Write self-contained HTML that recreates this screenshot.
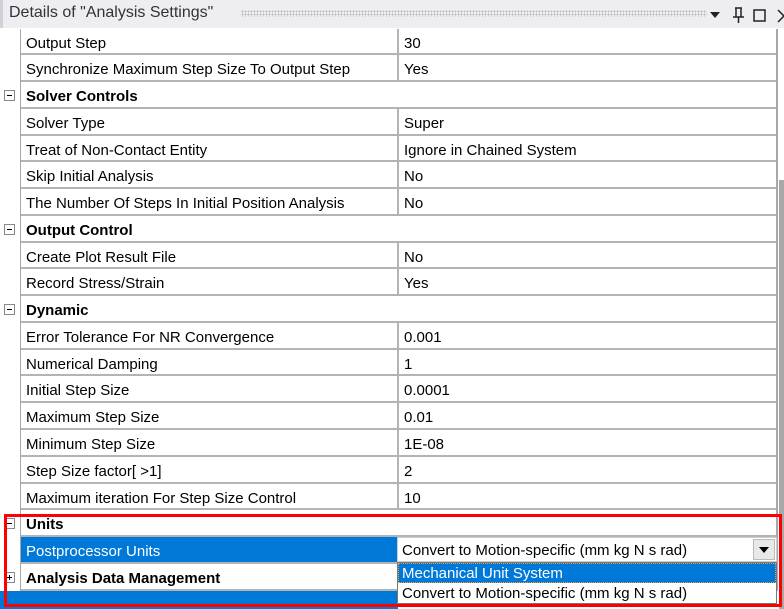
<!DOCTYPE html>
<html><head><style>
*{margin:0;padding:0;box-sizing:border-box}
body{width:784px;height:609px;overflow:hidden;background:#fff;font-family:"Liberation Sans",sans-serif;font-size:15px;color:#000;position:relative}
.title{position:absolute;left:0;top:0;width:784px;height:28px;background:#eeeef2;border-left:3px solid #cfd0d8}
.title span{position:absolute;left:6px;top:4px;font-size:16px;color:#333}
.dots{position:absolute;left:238px;top:10px;width:466px;height:7px;background-image:radial-gradient(#b8b8b8 0.8px,transparent 1px);background-size:3px 3px}
.rows{position:absolute;left:20px;top:28.5px;width:758px;border-left:1px solid #a8a8a8;border-right:2px solid #a8a8a8}
.r{height:26.78px;border-bottom:2px solid #b4b4b4;position:relative;white-space:nowrap}
.r .a{position:absolute;left:5px;top:6px}
.r .b{position:absolute;left:376px;top:0;bottom:-2px;border-left:2px solid #b4b4b4;padding-left:5px;padding-top:6px}
.r.c .a{font-weight:bold}
.pm{position:absolute;left:4px;width:11px;height:11px;border:1px solid #888;background:#fff;font-size:11px;line-height:9px;text-align:center}
.pm::after{content:"";position:absolute;left:2px;top:4px;width:5px;height:1px;background:#000}
.pm.p::before{content:"";position:absolute;left:4px;top:2px;width:1px;height:5px;background:#000}
</style></head><body>
<div class="title"><span>Details of "Analysis Settings"</span><div class="dots"></div>
<svg style="position:absolute;left:705px;top:6px" width="79" height="18">
<path d="M2 6h10l-5 6z" fill="#222"/>
<path d="M27 2h7M28 2v9M33 2v9M25 11h11M30.5 11v6" stroke="#222" stroke-width="1.5" fill="none"/>
<rect x="46" y="4" width="11" height="11" fill="none" stroke="#222" stroke-width="1.5"/>
<path d="M70 4l6 6-6 6" stroke="#222" stroke-width="1.5" fill="none"/>
</svg></div>
<div class="rows">
<div class="r"><span class="a">Output Step</span><span class="b">30</span></div>
<div class="r"><span class="a">Synchronize Maximum Step Size To Output Step</span><span class="b">Yes</span></div>
<div class="r c"><span class="a">Solver Controls</span></div>
<div class="r"><span class="a">Solver Type</span><span class="b">Super</span></div>
<div class="r"><span class="a">Treat of Non-Contact Entity</span><span class="b">Ignore in Chained System</span></div>
<div class="r"><span class="a">Skip Initial Analysis</span><span class="b">No</span></div>
<div class="r"><span class="a">The Number Of Steps In Initial Position Analysis</span><span class="b">No</span></div>
<div class="r c"><span class="a">Output Control</span></div>
<div class="r"><span class="a">Create Plot Result File</span><span class="b">No</span></div>
<div class="r"><span class="a">Record Stress/Strain</span><span class="b">Yes</span></div>
<div class="r c"><span class="a">Dynamic</span></div>
<div class="r"><span class="a">Error Tolerance For NR Convergence</span><span class="b">0.001</span></div>
<div class="r"><span class="a">Numerical Damping</span><span class="b">1</span></div>
<div class="r"><span class="a">Initial Step Size</span><span class="b">0.0001</span></div>
<div class="r"><span class="a">Maximum Step Size</span><span class="b">0.01</span></div>
<div class="r"><span class="a">Minimum Step Size</span><span class="b">1E-08</span></div>
<div class="r"><span class="a">Step Size factor[ &gt;1]</span><span class="b">2</span></div>
<div class="r"><span class="a">Maximum iteration For Step Size Control</span><span class="b">10</span></div>
<div class="r c"><span class="a">Units</span></div>
<div class="r" style="background:#0078d7;color:#fff"><span class="a">Postprocessor Units</span></div>
<div class="r c"><span class="a">Analysis Data Management</span></div>
</div>
<div class="pm" style="top:90px"></div>
<div class="pm" style="top:224px"></div>
<div class="pm" style="top:304px"></div>
<div class="pm" style="top:518px"></div>
<div class="pm p" style="top:572px"></div>
<div style="position:absolute;left:0;top:591px;width:398px;height:18px;background:#0078d7"></div>
<div style="position:absolute;left:779px;top:180px;width:5px;height:429px;background:#a8a8a8"></div>
<div style="position:absolute;left:397px;top:537px;width:380px;height:25px;background:#fff;border:1px solid #ccc;white-space:nowrap"><span style="position:absolute;left:4px;top:4px">Convert to Motion-specific (mm kg N s rad)</span>
<div style="position:absolute;right:1px;top:1px;width:22px;height:21px;background:#e8e8e8;border:1px solid #bbb"><svg width="20" height="19"><path d="M5 7h10l-5 6z" fill="#000"/></svg></div></div>
<div style="position:absolute;left:397px;top:562px;width:380px;height:42px;background:#fff;border:1px solid #777;white-space:nowrap">
<div style="height:20px;background:#0078d7;color:#fff;padding-left:4px;line-height:21px;outline:1px dotted #f0a040;outline-offset:-1px">Mechanical Unit System</div>
<div style="height:20px;padding-left:4px;line-height:21px">Convert to Motion-specific (mm kg N s rad)</div></div>
<div style="position:absolute;left:4px;top:514px;width:778px;height:93px;border:3px solid #f00"></div>
</body></html>
